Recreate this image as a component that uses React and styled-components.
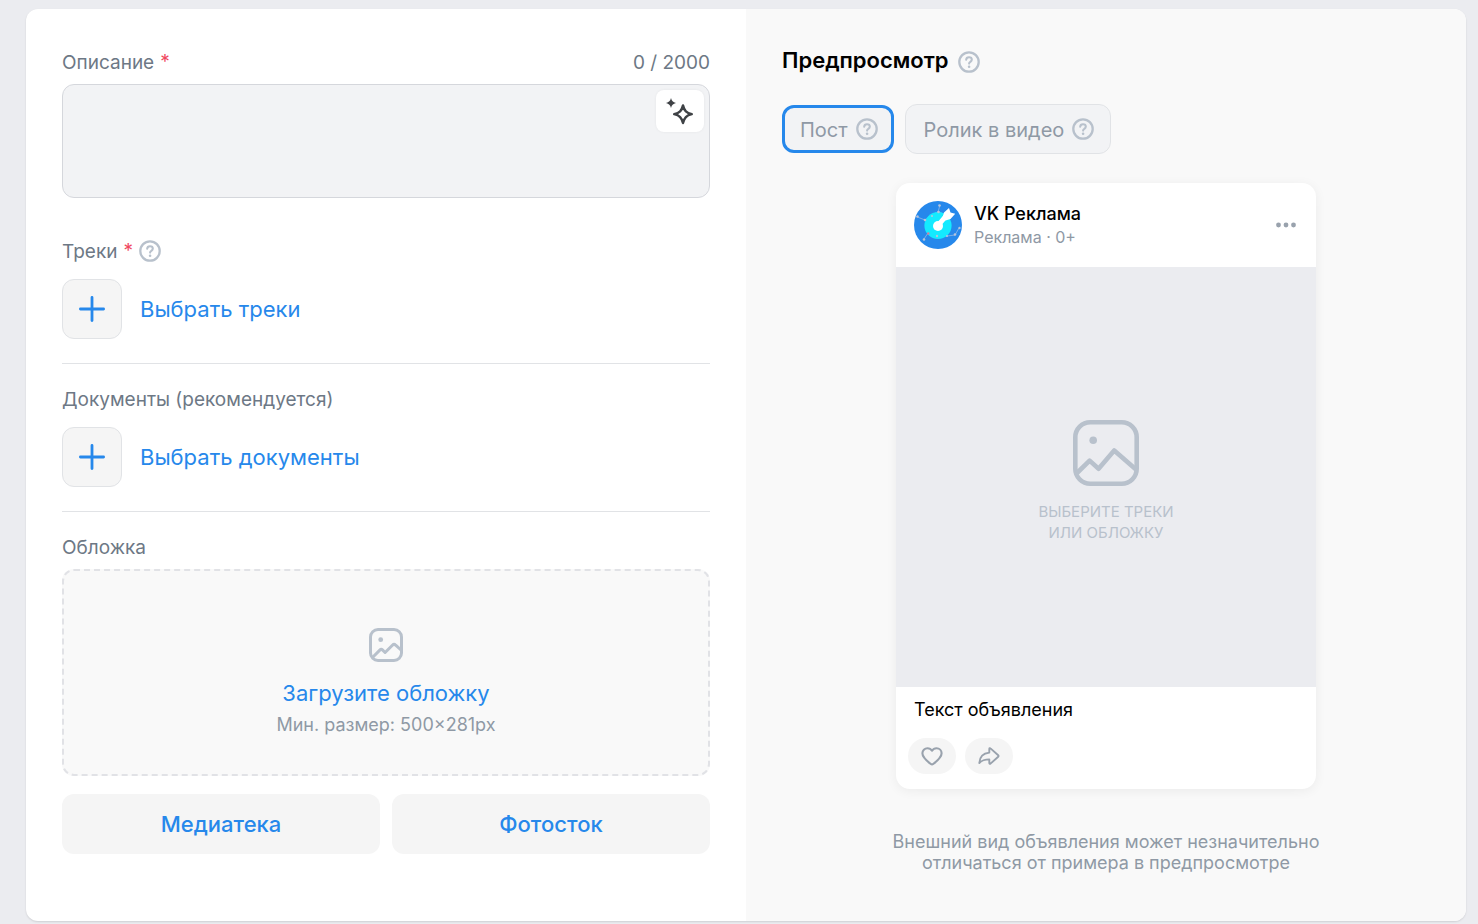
import React, { useState } from "react";
import styled, { createGlobalStyle } from "styled-components";

const GlobalStyle = createGlobalStyle`
  :root {
    --blue: #2688eb;
    --page: #ebecf0;
    --grey-bg: #f5f5f5;
    --field-bg: #f2f3f5;
    --border: #e1e3e6;
    --label: #6d7885;
    --hint: #8f99a5;
    --muted: #99a2ad;
    --icon: #b8c1cc;
  }

  * {
    box-sizing: border-box;
  }

  body {
    margin: 0;
    background-color: var(--page);
    color: #000;
    font-family: Inter, "Open Sans", sans-serif;
  }

  button,
  textarea {
    font-family: inherit;
  }

  svg {
    display: block;
    flex-shrink: 0;
  }
`;

const Page = styled.main`
  padding: 9px 12px 3px 26px;
`;

const Card = styled.div`
  display: grid;
  grid-template-columns: 1fr 1fr;
  background-color: #fff;
  border-radius: 12px;
  overflow: hidden;
  box-shadow: 0 1px 2px rgba(0, 0, 0, 0.12);
`;

const FormPane = styled.form`
  padding: 41px 36px 67px;
`;

const PreviewPane = styled.section`
  display: flex;
  flex-direction: column;
  padding: 39px 36px 48px;
  background-color: #f9f9f9;
`;

const Section = styled.div`
  display: flex;
  flex-direction: column;
  gap: ${(props) => props.$gap || 10}px;
  padding-bottom: 24px;
  margin-bottom: ${(props) => (props.$divided ? 23 : 17)}px;
  border-bottom: ${(props) =>
    props.$divided ? "1px solid var(--border)" : "none"};

  &:last-child {
    padding-bottom: 0;
    margin-bottom: 0;
  }
`;

const LabelRow = styled.div`
  display: flex;
  align-items: center;
  height: 24px;
  font-size: 19px;
  line-height: 24px;
  color: var(--label);
`;

const LabelText = styled.label`
  padding-top: 2px;
`;

const Required = styled.span`
  margin: 0 6px;
  color: #f0485f;
`;

const Counter = styled.span`
  margin-left: auto;
  padding-top: 2px;
`;

const HelpButton = styled.button`
  display: flex;
  padding: 0;
  border: none;
  background: none;
  color: var(--icon);
  cursor: pointer;
`;

const TextBox = styled.div`
  position: relative;
  display: flex;
`;

const TextArea = styled.textarea`
  width: 100%;
  height: 114px;
  padding: 12px 64px 12px 14px;
  border: 1px solid #d5d7dc;
  border-radius: 12px;
  background-color: var(--field-bg);
  font-size: 19px;
  line-height: 24px;
  resize: none;
`;

const MagicButton = styled.button`
  position: absolute;
  top: 6px;
  right: 6px;
  display: flex;
  align-items: center;
  justify-content: center;
  width: 48px;
  height: 42px;
  padding: 3px 0 0;
  border: none;
  border-radius: 8px;
  background-color: #fff;
  color: #3f4246;
  box-shadow: 0 0 3px rgba(0, 0, 0, 0.06);
  cursor: pointer;
`;

const AddButton = styled.button`
  display: flex;
  align-items: center;
  gap: 18px;
  align-self: flex-start;
  padding: 0;
  border: none;
  background: none;
  font-size: 22px;
  line-height: 28px;
  color: var(--blue);
  cursor: pointer;
`;

const AddBox = styled.span`
  display: flex;
  align-items: center;
  justify-content: center;
  width: 60px;
  height: 60px;
  border: 1px solid var(--border);
  border-radius: 12px;
  background-color: var(--grey-bg);
`;

const DropZone = styled.button`
  display: flex;
  flex-direction: column;
  align-items: center;
  height: 207px;
  padding: 57px 0 0;
  border: 2px dashed #e1e2e6;
  border-radius: 12px;
  background-color: #f9f9f9;
  color: var(--icon);
  cursor: pointer;
`;

const DropTitle = styled.span`
  margin-top: 17px;
  font-size: 22px;
  line-height: 28px;
  color: var(--blue);
`;

const DropHint = styled.span`
  margin-top: 6px;
  font-size: 18px;
  line-height: 24px;
  color: var(--hint);
`;

const SourceButtons = styled.div`
  display: grid;
  grid-template-columns: 1fr 1fr;
  gap: 12px;
  margin-top: 8px;
`;

const SourceButton = styled.button`
  height: 60px;
  border: none;
  border-radius: 12px;
  background-color: var(--grey-bg);
  font-size: 22px;
  font-weight: 500;
  color: var(--blue);
  cursor: pointer;
`;

const Title = styled.h2`
  display: flex;
  align-items: flex-end;
  gap: 9px;
  margin: 0;
  font-size: 22px;
  line-height: 25px;
  font-weight: 600;
`;

const Tabs = styled.div`
  display: flex;
  align-items: center;
  gap: 11px;
  margin-top: 31px;
`;

const Tab = styled.button`
  display: flex;
  align-items: center;
  gap: 8px;
  height: ${(props) => (props.$active ? 48 : 50)}px;
  padding: ${(props) => (props.$active ? "0 13px 0 15px" : "0 16px 0 18px")};
  border: ${(props) =>
    props.$active ? "3px solid var(--blue)" : "1px solid var(--border)"};
  border-radius: 12px;
  background-color: var(--field-bg);
  font-size: 20px;
  line-height: 24px;
  color: var(--hint);
  cursor: pointer;

  svg {
    color: var(--icon);
  }
`;

const TabText = styled.span`
  padding-top: 2px;
`;

const Post = styled.article`
  align-self: center;
  width: 420px;
  max-width: 100%;
  margin-top: 29px;
  border-radius: 14px;
  background-color: #fff;
  box-shadow: 0 2px 12px rgba(0, 0, 0, 0.06);
`;

const PostHeader = styled.header`
  display: flex;
  align-items: center;
  gap: 12px;
  height: 84px;
  padding: 0 18px;
`;

const PostAuthor = styled.div`
  flex: 1;
`;

const AuthorName = styled.div`
  font-size: 18px;
  line-height: 24px;
  font-weight: 500;
`;

const AuthorNote = styled.div`
  font-size: 16px;
  line-height: 22px;
  color: var(--hint);
`;

const MoreButton = styled.button`
  display: flex;
  padding: 0;
  border: none;
  background: none;
  color: var(--muted);
  cursor: pointer;
`;

const PostImage = styled.div`
  display: flex;
  flex-direction: column;
  align-items: center;
  justify-content: center;
  gap: 15px;
  aspect-ratio: 1;
  padding-top: 9px;
  background-color: var(--page);
  font-size: 15px;
  line-height: 21px;
  text-align: center;
  text-transform: uppercase;
  color: var(--icon);
`;

const PostText = styled.p`
  margin: 0;
  padding: 11px 18px 16px;
  font-size: 18px;
  line-height: 24px;
`;

const PostActions = styled.div`
  display: flex;
  gap: 9px;
  padding: 0 12px 15px;
`;

const ActionButton = styled.button`
  display: flex;
  align-items: center;
  justify-content: center;
  width: 48px;
  height: 36px;
  padding: 0;
  border: none;
  border-radius: 18px;
  background-color: var(--grey-bg);
  color: var(--muted);
  cursor: pointer;
`;

const Note = styled.p`
  align-self: center;
  width: 450px;
  max-width: 100%;
  margin: 42px 0 0;
  font-size: 18px;
  line-height: 21px;
  text-align: center;
  color: var(--hint);
`;

function HelpIcon() {
  return (
    <svg width="22" height="22" viewBox="0 0 22 22" fill="none" stroke="currentColor">
      <circle cx="11" cy="11" r="9.7" strokeWidth="2.3" />
      <path
        d="M8.2 8.7C8.3 7.1 9.4 6.200 11 6.200c1.700 0 2.800 1 2.800 2.400 0 1.200-.7 1.700-1.500 2.300-.9.600-1.200 1-1.200 1.700"
        strokeWidth="2.1"
        strokeLinecap="round"
      />
      <circle cx="11.1" cy="15.7" r="1.3" fill="currentColor" stroke="none" />
    </svg>
  );
}

function PlusIcon() {
  return (
    <svg width="26" height="26" viewBox="0 0 26 26" fill="none" stroke="currentColor">
      <path d="M13 1.4v23.2M1.4 13h23.2" strokeWidth="2.8" strokeLinecap="round" />
    </svg>
  );
}

function SparklesIcon() {
  return (
    <svg width="30" height="30" viewBox="0 0 30 30" fill="none" stroke="currentColor">
      <path
        d="M18 7.4c1.3 5.4 3.4 7.5 8.8 8.8-5.4 1.3-7.5 3.4-8.8 8.8-1.3-5.4-3.4-7.5-8.8-8.8 5.400-1.300 7.500-3.400 8.800-8.800z"
        strokeWidth="2.4"
        strokeLinejoin="round"
      />
      <path
        d="M6 0c.8 3 1.900 4.100 5 5-3.100.9-4.200 2-5 5-.8-3-1.900-4.100-5-5 3.100-.9 4.200-2 5-5z"
        fill="currentColor"
        stroke="none"
      />
    </svg>
  );
}

function SmallPictureIcon() {
  return (
    <svg width="34" height="34" viewBox="0 0 34 34" fill="none" stroke="currentColor">
      <rect x="1.5" y="1.5" width="31" height="31" rx="7.500" strokeWidth="3" />
      <path
        d="M3.500 29.500l7.300-7.400c.9-.9 2-.9 2.900 0l2.400 2.400 7.300-7.300c1-1 2.300-1 3.300 0l5.300 4.800"
        strokeWidth="3"
        strokeLinejoin="round"
      />
      <circle cx="11.700" cy="11.700" r="2.400" fill="currentColor" stroke="none" />
    </svg>
  );
}

function LargePictureIcon() {
  return (
    <svg width="66" height="66" viewBox="0 0 66 66" fill="none" stroke="currentColor">
      <rect x="2.300" y="2.300" width="61.400" height="61.400" rx="15" strokeWidth="4.600" />
      <path
        d="M4 53l12.600-12.400 9 8.200L41.200 30.500 63 49.600"
        strokeWidth="4.600"
        strokeLinejoin="round"
      />
      <circle cx="20.200" cy="20.300" r="3.800" fill="currentColor" stroke="none" />
    </svg>
  );
}

function AvatarLogo() {
  return (
    <svg width="48" height="48" viewBox="0 0 48 48">
      <circle cx="24" cy="24" r="24" fill="#2688eb" />
      <g fill="none" stroke="#8fb9e6" strokeWidth="0.8">
        <path d="M2 15.500l9 3.500 7-5 6-3 2-7M10 38l4-6 9 3 10 0 8-1 4-7M25 11l7 3" />
      </g>
      <circle cx="24" cy="24.500" r="13.600" fill="#14eaff" />
      <path
        d="M24 24.500l8-9.500"
        stroke="#fff"
        strokeWidth="5"
        strokeLinecap="round"
      />
      <path d="M28.500 16.500L30 11.500l5-4.500 1.500 4.500 4.700 1.300-4.700 5.200-5 1.500z" fill="#fff" />
      <circle cx="24" cy="25" r="5" fill="#fff" />
      <g fill="#b7c4da">
        <circle cx="25.500" cy="4.500" r="1.300" />
        <circle cx="24.500" cy="11" r="1.300" />
        <circle cx="3.500" cy="15.500" r="1.200" />
        <circle cx="11" cy="19" r="1.300" />
        <circle cx="18" cy="15" r="1" />
        <circle cx="10" cy="38.500" r="1.300" />
        <circle cx="23" cy="35" r="1.200" />
        <circle cx="33" cy="35" r="1.100" />
        <circle cx="41" cy="33.500" r="1.300" />
        <circle cx="45.500" cy="27" r="1.200" />
      </g>
      <circle cx="14.300" cy="32.500" r="1.200" fill="#e0789a" />
    </svg>
  );
}

function DotsIcon() {
  return (
    <svg width="24" height="24" viewBox="0 0 24 24" fill="currentColor">
      <circle cx="4.500" cy="12" r="2.400" />
      <circle cx="12" cy="12" r="2.400" />
      <circle cx="19.500" cy="12" r="2.400" />
    </svg>
  );
}

function HeartIcon() {
  return (
    <svg width="24" height="24" viewBox="0 0 24 24" fill="none" stroke="currentColor">
      <path
        d="M7.500 4.200C4.600 4.200 2.400 6.400 2.400 9.300c0 4 3.400 6.900 8.400 10.700.8.600 1.600.600 2.400 0 5-3.800 8.400-6.700 8.400-10.700 0-2.900-2.200-5.100-5.100-5.100-1.900 0-3.500.9-4.500 2.500-1-1.600-2.600-2.500-4.500-2.500z"
        strokeWidth="2.100"
        strokeLinejoin="round"
      />
    </svg>
  );
}

function ShareIcon() {
  return (
    <svg width="24" height="24" viewBox="0 0 24 24" fill="none" stroke="currentColor">
      <path
        d="M12.300 4.900v3.700C6 9.200 2.700 12.500 2.300 19c2.600-2.700 5.500-3.600 10-3.600v3.700c0 .8.700 1 1.200.5l7.700-6.800c.5-.4.5-1.100 0-1.600l-7.700-6.800c-.5-.5-1.200-.3-1.200.5z"
        strokeWidth="1.900"
        strokeLinejoin="round"
      />
    </svg>
  );
}

function Help() {
  return (
    <HelpButton type="button" aria-label="Подсказка">
      <HelpIcon />
    </HelpButton>
  );
}

function AddField({ id, label, required, help, action }) {
  return (
    <Section $divided $gap={16}>
      <LabelRow>
        <LabelText htmlFor={id}>{label}</LabelText>
        {required && <Required>*</Required>}
        {help && <Help />}
      </LabelRow>
      <AddButton id={id} type="button">
        <AddBox>
          <PlusIcon />
        </AddBox>
        {action}
      </AddButton>
    </Section>
  );
}

function AdForm() {
  const [text, setText] = useState("");

  return (
    <FormPane>
      <Section>
        <LabelRow>
          <LabelText htmlFor="description">Описание</LabelText>
          <Required>*</Required>
          <Counter>{text.length} / 2000</Counter>
        </LabelRow>
        <TextBox>
          <TextArea
            id="description"
            maxLength={2000}
            value={text}
            onChange={(e) => setText(e.target.value)}
          />
          <MagicButton type="button" aria-label="Сгенерировать текст">
            <SparklesIcon />
          </MagicButton>
        </TextBox>
      </Section>
      <AddField
        id="tracks"
        label="Треки"
        required
        help
        action="Выбрать треки"
      />
      <AddField
        id="documents"
        label="Документы (рекомендуется)"
        action="Выбрать документы"
      />
      <Section>
        <LabelRow>
          <LabelText htmlFor="cover">Обложка</LabelText>
        </LabelRow>
        <DropZone id="cover" type="button">
          <SmallPictureIcon />
          <DropTitle>Загрузите обложку</DropTitle>
          <DropHint>Мин. размер: 500×281px</DropHint>
        </DropZone>
        <SourceButtons>
          <SourceButton type="button">Медиатека</SourceButton>
          <SourceButton type="button">Фотосток</SourceButton>
        </SourceButtons>
      </Section>
    </FormPane>
  );
}

const formats = ["Пост", "Ролик в видео"];

function Preview() {
  const [format, setFormat] = useState(formats[0]);

  return (
    <PreviewPane>
      <Title>
        Предпросмотр
        <Help />
      </Title>
      <Tabs>
        {formats.map((name) => (
          <Tab
            key={name}
            type="button"
            $active={name === format}
            aria-pressed={name === format}
            onClick={() => setFormat(name)}
          >
            <TabText>{name}</TabText>
            <HelpIcon />
          </Tab>
        ))}
      </Tabs>
      <Post>
        <PostHeader>
          <AvatarLogo />
          <PostAuthor>
            <AuthorName>VK Реклама</AuthorName>
            <AuthorNote>Реклама · 0+</AuthorNote>
          </PostAuthor>
          <MoreButton type="button" aria-label="Ещё">
            <DotsIcon />
          </MoreButton>
        </PostHeader>
        <PostImage>
          <LargePictureIcon />
          <span>
            Выберите треки
            <br />
            или обложку
          </span>
        </PostImage>
        <PostText>Текст объявления</PostText>
        <PostActions>
          <ActionButton type="button" aria-label="Нравится">
            <HeartIcon />
          </ActionButton>
          <ActionButton type="button" aria-label="Поделиться">
            <ShareIcon />
          </ActionButton>
        </PostActions>
      </Post>
      <Note>
        Внешний вид объявления может незначительно отличаться от примера в
        предпросмотре
      </Note>
    </PreviewPane>
  );
}

function App() {
  return (
    <>
      <GlobalStyle />
      <Page>
        <Card>
          <AdForm />
          <Preview />
        </Card>
      </Page>
    </>
  );
}

export default App;
